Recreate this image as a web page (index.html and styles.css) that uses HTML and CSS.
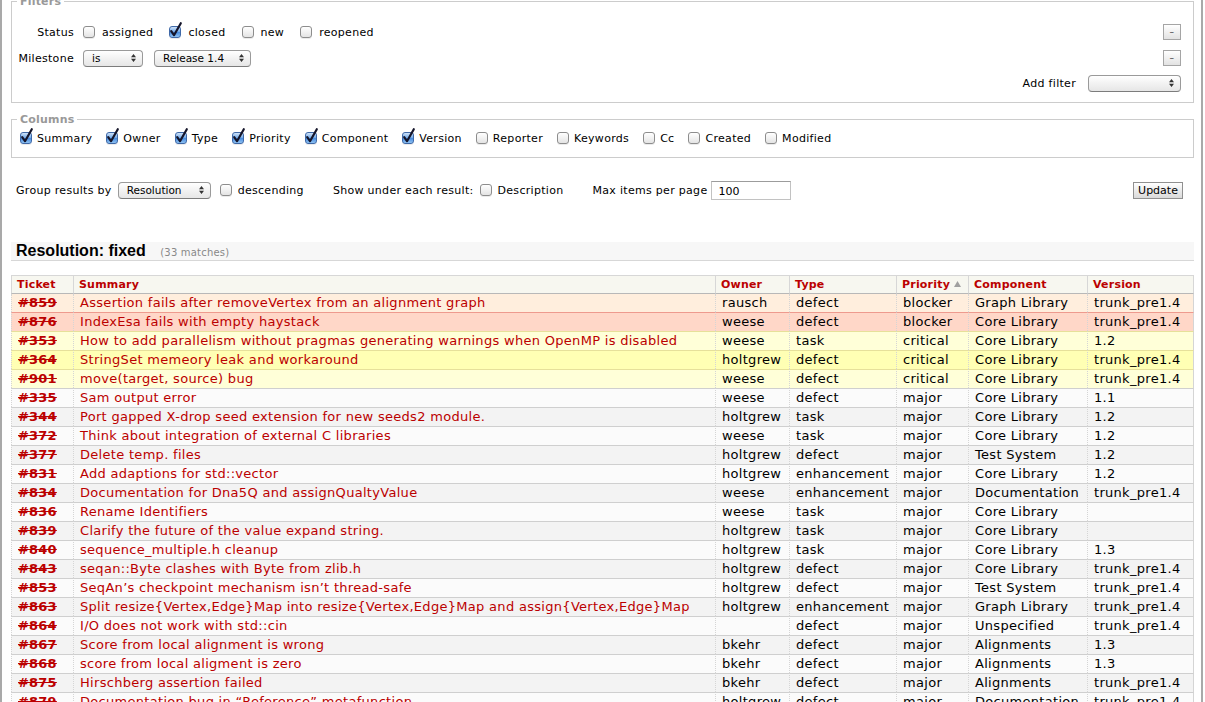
FILE: index.html
```html
<!DOCTYPE html>
<html>
<head>
<meta charset="utf-8">
<title>Custom Query</title>
<link rel="stylesheet" href="styles.css">
</head>
<body>
<div class="frame">

  <div class="fset filters">
    <span class="legend">Filters</span>
    <div class="frow row1">
      <span class="flabel">Status</span>
      <label class="opt st"><span class="cb"></span>assigned</label>
      <label class="opt st"><span class="cb on"><svg class="tick" width="14" height="16" viewBox="0 0 14 16"><path d="M2.2 9.2 L5 13.2 L11.8 1.2" fill="none" stroke="#15152a" stroke-width="2.2" stroke-linecap="round" stroke-linejoin="round"/></svg></span>closed</label>
      <label class="opt st"><span class="cb"></span>new</label>
      <label class="opt st"><span class="cb"></span>reopened</label>
      <span class="rm">–</span>
    </div>
    <div class="frow row2">
      <span class="flabel">Milestone</span>
      <span class="sel sel-is">is<svg class="arr" width="5" height="8" viewBox="0 0 5 8"><path d="M0 3.2 L2.5 0 L5 3.2 Z M0 4.8 L2.5 8 L5 4.8 Z" fill="#333"/></svg></span>
      <span class="sel sel-rel">Release 1.4<svg class="arr" width="5" height="8" viewBox="0 0 5 8"><path d="M0 3.2 L2.5 0 L5 3.2 Z M0 4.8 L2.5 8 L5 4.8 Z" fill="#333"/></svg></span>
      <span class="rm">–</span>
    </div>
    <div class="frow row3">
      <span class="addlabel">Add filter</span>
      <span class="sel sel-add"><svg class="arr" width="5" height="8" viewBox="0 0 5 8"><path d="M0 3.2 L2.5 0 L5 3.2 Z M0 4.8 L2.5 8 L5 4.8 Z" fill="#333"/></svg></span>
    </div>
  </div>

  <div class="fset columns">
    <span class="legend">Columns</span>
    <div class="colrow">
      <label class="opt co"><span class="cb on"><svg class="tick" width="14" height="16" viewBox="0 0 14 16"><path d="M2.2 9.2 L5 13.2 L11.8 1.2" fill="none" stroke="#15152a" stroke-width="2.2" stroke-linecap="round" stroke-linejoin="round"/></svg></span>Summary</label>
      <label class="opt co"><span class="cb on"><svg class="tick" width="14" height="16" viewBox="0 0 14 16"><path d="M2.2 9.2 L5 13.2 L11.8 1.2" fill="none" stroke="#15152a" stroke-width="2.2" stroke-linecap="round" stroke-linejoin="round"/></svg></span>Owner</label>
      <label class="opt co"><span class="cb on"><svg class="tick" width="14" height="16" viewBox="0 0 14 16"><path d="M2.2 9.2 L5 13.2 L11.8 1.2" fill="none" stroke="#15152a" stroke-width="2.2" stroke-linecap="round" stroke-linejoin="round"/></svg></span>Type</label>
      <label class="opt co"><span class="cb on"><svg class="tick" width="14" height="16" viewBox="0 0 14 16"><path d="M2.2 9.2 L5 13.2 L11.8 1.2" fill="none" stroke="#15152a" stroke-width="2.2" stroke-linecap="round" stroke-linejoin="round"/></svg></span>Priority</label>
      <label class="opt co"><span class="cb on"><svg class="tick" width="14" height="16" viewBox="0 0 14 16"><path d="M2.2 9.2 L5 13.2 L11.8 1.2" fill="none" stroke="#15152a" stroke-width="2.2" stroke-linecap="round" stroke-linejoin="round"/></svg></span>Component</label>
      <label class="opt co"><span class="cb on"><svg class="tick" width="14" height="16" viewBox="0 0 14 16"><path d="M2.2 9.2 L5 13.2 L11.8 1.2" fill="none" stroke="#15152a" stroke-width="2.2" stroke-linecap="round" stroke-linejoin="round"/></svg></span>Version</label>
      <label class="opt co"><span class="cb"></span>Reporter</label>
      <label class="opt co"><span class="cb"></span>Keywords</label>
      <label class="opt co"><span class="cb"></span>Cc</label>
      <label class="opt co"><span class="cb"></span>Created</label>
      <label class="opt co"><span class="cb"></span>Modified</label>
    </div>
  </div>

  <div class="opts">
    <span class="olabel">Group results by</span>
    <span class="sel sel-grp">Resolution<svg class="arr" width="5" height="8" viewBox="0 0 5 8"><path d="M0 3.2 L2.5 0 L5 3.2 Z M0 4.8 L2.5 8 L5 4.8 Z" fill="#333"/></svg></span>
    <label class="opt desc"><span class="cb"></span>descending</label>
    <span class="olabel show">Show under each result:</span>
    <label class="opt descr"><span class="cb"></span>Description</label>
    <span class="olabel max">Max items per page</span>
    <span class="num">100</span>
    <span class="btn">Update</span>
  </div>

  <h2 class="grouphead">Resolution: fixed <span class="count">(33 matches)</span></h2>

  <table class="tickets">
    <colgroup>
      <col class="c-id"><col class="c-sum"><col class="c-own"><col class="c-type"><col class="c-prio"><col class="c-comp"><col class="c-ver">
    </colgroup>
    <thead>
      <tr><th>Ticket</th><th>Summary</th><th>Owner</th><th>Type</th><th>Priority<svg class="sort" width="7" height="6" viewBox="0 0 7 6"><path d="M0 6 L3.5 0 L7 6 Z" fill="#a0a0a0"/></svg></th><th>Component</th><th>Version</th></tr>
    </thead>
    <tbody>
      <tr class="p1 lt"><td class="id">#859</td><td class="sum">Assertion fails after removeVertex from an alignment graph</td><td>rausch</td><td>defect</td><td>blocker</td><td>Graph Library</td><td>trunk_pre1.4</td></tr>
      <tr class="p1 dk"><td class="id">#876</td><td class="sum">IndexEsa fails with empty haystack</td><td>weese</td><td>defect</td><td>blocker</td><td>Core Library</td><td>trunk_pre1.4</td></tr>
      <tr class="p2 lt"><td class="id">#353</td><td class="sum">How to add parallelism without pragmas generating warnings when OpenMP is disabled</td><td>weese</td><td>task</td><td>critical</td><td>Core Library</td><td>1.2</td></tr>
      <tr class="p2 dk"><td class="id">#364</td><td class="sum">StringSet memeory leak and workaround</td><td>holtgrew</td><td>defect</td><td>critical</td><td>Core Library</td><td>trunk_pre1.4</td></tr>
      <tr class="p2 lt"><td class="id">#901</td><td class="sum">move(target, source) bug</td><td>weese</td><td>defect</td><td>critical</td><td>Core Library</td><td>trunk_pre1.4</td></tr>
      <tr class="p3 lt"><td class="id">#335</td><td class="sum">Sam output error</td><td>weese</td><td>defect</td><td>major</td><td>Core Library</td><td>1.1</td></tr>
      <tr class="p3 dk"><td class="id">#344</td><td class="sum">Port gapped X-drop seed extension for new seeds2 module.</td><td>holtgrew</td><td>task</td><td>major</td><td>Core Library</td><td>1.2</td></tr>
      <tr class="p3 lt"><td class="id">#372</td><td class="sum">Think about integration of external C libraries</td><td>weese</td><td>task</td><td>major</td><td>Core Library</td><td>1.2</td></tr>
      <tr class="p3 dk"><td class="id">#377</td><td class="sum">Delete temp. files</td><td>holtgrew</td><td>defect</td><td>major</td><td>Test System</td><td>1.2</td></tr>
      <tr class="p3 lt"><td class="id">#831</td><td class="sum">Add adaptions for std::vector</td><td>holtgrew</td><td>enhancement</td><td>major</td><td>Core Library</td><td>1.2</td></tr>
      <tr class="p3 dk"><td class="id">#834</td><td class="sum">Documentation for Dna5Q and assignQualtyValue</td><td>weese</td><td>enhancement</td><td>major</td><td>Documentation</td><td>trunk_pre1.4</td></tr>
      <tr class="p3 lt"><td class="id">#836</td><td class="sum">Rename Identifiers</td><td>weese</td><td>task</td><td>major</td><td>Core Library</td><td></td></tr>
      <tr class="p3 dk"><td class="id">#839</td><td class="sum">Clarify the future of the value expand string.</td><td>holtgrew</td><td>task</td><td>major</td><td>Core Library</td><td></td></tr>
      <tr class="p3 lt"><td class="id">#840</td><td class="sum">sequence_multiple.h cleanup</td><td>holtgrew</td><td>task</td><td>major</td><td>Core Library</td><td>1.3</td></tr>
      <tr class="p3 dk"><td class="id">#843</td><td class="sum">seqan::Byte clashes with Byte from zlib.h</td><td>holtgrew</td><td>defect</td><td>major</td><td>Core Library</td><td>trunk_pre1.4</td></tr>
      <tr class="p3 lt"><td class="id">#853</td><td class="sum">SeqAn’s checkpoint mechanism isn’t thread-safe</td><td>holtgrew</td><td>defect</td><td>major</td><td>Test System</td><td>trunk_pre1.4</td></tr>
      <tr class="p3 dk"><td class="id">#863</td><td class="sum">Split resize{Vertex,Edge}Map into resize{Vertex,Edge}Map and assign{Vertex,Edge}Map</td><td>holtgrew</td><td>enhancement</td><td>major</td><td>Graph Library</td><td>trunk_pre1.4</td></tr>
      <tr class="p3 lt"><td class="id">#864</td><td class="sum">I/O does not work with std::cin</td><td></td><td>defect</td><td>major</td><td>Unspecified</td><td>trunk_pre1.4</td></tr>
      <tr class="p3 dk"><td class="id">#867</td><td class="sum">Score from local alignment is wrong</td><td>bkehr</td><td>defect</td><td>major</td><td>Alignments</td><td>1.3</td></tr>
      <tr class="p3 lt"><td class="id">#868</td><td class="sum">score from local aligment is zero</td><td>bkehr</td><td>defect</td><td>major</td><td>Alignments</td><td>1.3</td></tr>
      <tr class="p3 dk"><td class="id">#875</td><td class="sum">Hirschberg assertion failed</td><td>bkehr</td><td>defect</td><td>major</td><td>Alignments</td><td>trunk_pre1.4</td></tr>
      <tr class="p3 lt"><td class="id">#879</td><td class="sum">Documentation bug in “Reference” metafunction</td><td>holtgrew</td><td>defect</td><td>major</td><td>Documentation</td><td>trunk_pre1.4</td></tr>
    </tbody>
  </table>

</div>
</body>
</html>
```

FILE: styles.css
```css
html, body {
  margin: 0;
  padding: 0;
  overflow: hidden;
  background: #fff;
}
body {
  font-family: "DejaVu Sans", Verdana, sans-serif;
  font-size: 13px;
  color: #000;
  letter-spacing: 0.3px;
}
.frame {
  box-sizing: border-box;
  width: 1203px;
  height: 702px;
  border-left: 2px solid #a9a9a9;
  border-right: 2px solid #a9a9a9;
  padding: 1px 7px 0 9px;
  overflow: hidden;
}

/* fieldsets */
.fset {
  position: relative;
  border: 1px solid #cccccc;
}
.legend {
  position: absolute;
  top: -7px;
  left: 5px;
  padding: 0 3px;
  background: #fff;
  color: #999;
  font-size: 11px;
  font-weight: bold;
  line-height: 13px;
  letter-spacing: 0.2px;
}
.filters {
  padding: 21px 12px 10px 0;
}
.frow {
  display: flex;
  align-items: center;
  height: 18px;
  font-size: 11px;
}
.row2 { margin-top: 8px; }
.row3 { margin-top: 7px; justify-content: flex-end; }
.flabel {
  width: 62px;
  text-align: right;
  margin-right: 9px;
}
.addlabel { margin-right: 12px; }

/* checkbox + label */
.opt {
  display: inline-flex;
  align-items: center;
}
.cb {
  position: relative;
  display: inline-block;
  box-sizing: border-box;
  width: 12px;
  height: 12px;
  border: 1px solid #8d8d8d;
  border-radius: 3px;
  background: linear-gradient(#ffffff, #e4e4e4);
  box-shadow: 0 1px 0 rgba(0,0,0,0.08);
}
.cb.on {
  border-color: #3f69a8;
  background: linear-gradient(#cfe3fa, #79aeea 45%, #4a8ddf 55%, #8fc2f3);
}
.tick {
  position: absolute;
  left: -1px;
  top: -5px;
  overflow: visible;
}
.st .cb { margin-right: 7px; }
.st { margin-right: 16px; }
.colrow {
  display: flex;
  align-items: center;
  height: 16px;
  font-size: 11px;
}
.columns {
  margin-top: 16px;
  padding: 10px 8px 11px 8px;
}
.co .cb { margin-right: 5px; }
.co { margin-right: 14px; }

/* selects */
.sel {
  display: inline-flex;
  align-items: center;
  justify-content: space-between;
  box-sizing: border-box;
  height: 17px;
  padding: 0 6px 0 8px;
  border: 1px solid #9a9a9a;
  border-bottom-color: #7c7c7c;
  border-radius: 4px;
  background: linear-gradient(#ffffff, #f2f2f2 50%, #e6e6e6);
  font-size: 10.5px;
  letter-spacing: 0;
  color: #000;
}
.arr { flex: none; }
.sel-is { width: 60px; margin-right: 11px; }
.sel-rel { width: 97px; }
.sel-add { width: 93px; justify-content: flex-end; }
.sel-grp { width: 93px; margin-left: 6px; margin-right: 9px; }

/* remove buttons */
.rm {
  margin-left: auto;
  box-sizing: border-box;
  width: 18px;
  height: 16px;
  border: 1px solid #a5a5a5;
  background: linear-gradient(#ffffff, #e2e2e2);
  font-size: 9px;
  line-height: 14px;
  text-align: center;
  color: #333;
}

/* options row */
.opts {
  display: flex;
  align-items: center;
  height: 22px;
  margin-top: 21px;
  padding: 0 11px 0 5px;
  font-size: 11px;
}
.desc .cb, .descr .cb { margin-right: 6px; }
.show { margin-left: 29px; margin-right: 6px; }
.max { margin-left: 29px; margin-right: 4px; }
.num {
  box-sizing: border-box;
  width: 80px;
  height: 19px;
  border: 1px solid #c2c2c2;
  border-top-color: #9c9c9c;
  padding-left: 6px;
  line-height: 19px;
  font-size: 11px;
  letter-spacing: 0;
}
.btn {
  margin-left: auto;
  box-sizing: border-box;
  width: 50px;
  height: 17px;
  border: 1px solid #909090;
  background: linear-gradient(#ffffff, #e8e8e8 60%, #dadada);
  font-size: 11px;
  line-height: 15px;
  text-align: center;
  letter-spacing: 0;
}

/* group heading */
.grouphead {
  margin: 41px 0 0;
  padding: 0 5px;
  height: 18px;
  line-height: 18px;
  background: #f7f7f7;
  border-bottom: 1px solid #d7d7d7;
  font-family: "Liberation Sans", Arial, sans-serif;
  font-size: 16px;
  font-weight: bold;
  letter-spacing: 0;
}
.count {
  margin-left: 10px;
  font-family: "DejaVu Sans", Verdana, sans-serif;
  font-size: 10px;
  font-weight: normal;
  color: #888;
  letter-spacing: 0.2px;
}

/* ticket table */
.tickets {
  margin-top: 14px;
  width: 1183px;
  table-layout: fixed;
  border-collapse: separate;
  border-spacing: 0;
}
.c-id { width: 62px; }
.c-sum { width: 642px; }
.c-own { width: 74px; }
.c-type { width: 107px; }
.c-prio { width: 72px; }
.c-comp { width: 119px; }
.c-ver { width: 107px; }
.tickets th {
  padding: 0 5px;
  line-height: 17px;
  text-align: left;
  font-size: 11px;
  font-weight: bold;
  color: #b00;
  letter-spacing: 0.2px;
  background: #f7f7f0;
  border-top: 1px solid #d7d7d7;
  border-bottom: 1px solid #b8b8b8;
  border-left: 1px solid #d7d7d7;
  white-space: nowrap;
}
.tickets th:last-child { border-right: 1px solid #d7d7d7; }
.sort { margin-left: 4px; vertical-align: 1px; }
.tickets td {
  padding: 0 6px;
  line-height: 18px;
  border-top: 1px solid #d0d0d0;
  border-left: 1px dotted #d5d5d5;
  white-space: nowrap;
  overflow: hidden;
}
.tickets td:last-child { border-right: 1px solid #d5d5d5; }
.tickets tbody tr:first-child td { border-top: 0; }
.tickets td.id {
  font-weight: bold;
  color: #b00;
  letter-spacing: 0.2px;
  text-decoration: line-through;
}
.tickets td.sum { color: #b00; }

.p1.lt { background: #ffeedd; }
.p1.dk { background: #ffd7c8; }
.p1 td { border-top-color: #ee9a8e; }
.p2.lt { background: #ffffd8; }
.p2.dk { background: #ffffb4; }
.p2 td { border-top-color: #e6e09a; }
.p3.lt { background: #fbfbfb; }
.p3.dk { background: #f3f3f3; }
.p3 td { border-top-color: #cfcfcf; }
```
